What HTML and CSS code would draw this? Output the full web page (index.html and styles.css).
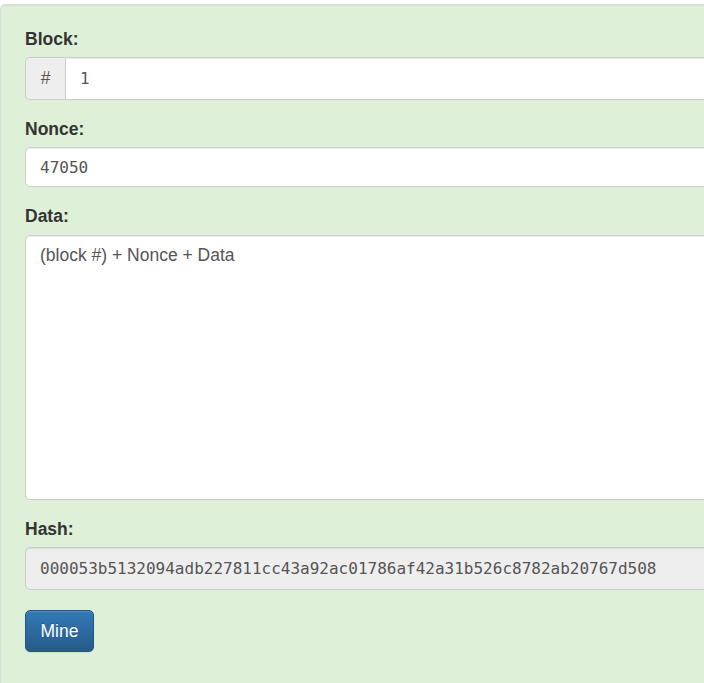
FILE: index.html
```html
<!DOCTYPE html>
<html>
<head>
<meta charset="utf-8">
<link rel="stylesheet" href="styles.css">
</head>
<body>
<div class="well">
  <form class="block-form">
    <div class="form-group">
      <label class="form-label">Block:</label>
      <div class="input-group">
        <span class="input-addon">#</span>
        <input class="form-control mono addon-input" type="text" value="1">
      </div>
    </div>
    <div class="form-group">
      <label class="form-label">Nonce:</label>
      <input class="form-control mono nonce" type="text" value="47050">
    </div>
    <div class="form-group">
      <label class="form-label">Data:</label>
      <textarea class="form-control data" rows="10">(block #) + Nonce + Data</textarea>
    </div>
    <div class="form-group hash-group">
      <label class="form-label">Hash:</label>
      <input class="form-control mono readonly" type="text" readonly value="000053b5132094adb227811cc43a92ac01786af42a31b526c8782ab20767d508">
    </div>
    <button class="btn-primary" type="button">Mine</button>
  </form>
</div>
</body>
</html>
```

FILE: styles.css
```css
html, body {
  margin: 0;
  padding: 0;
  background: #fff;
  overflow: hidden;
}

body {
  font-family: "Liberation Sans", Arial, sans-serif;
  font-size: 17.5px;
  line-height: 25px;
  color: #333;
}

.well {
  margin-top: 4px;
  width: 960px;
  min-height: 760px;
  box-sizing: border-box;
  background: #dff0d8;
  border: 1px solid #dcdcdc;
  border-radius: 5px;
  box-shadow: inset 0 1px 1px rgba(0, 0, 0, 0.05);
  padding: 21.5px 24px 24px 24px;
}

.block-form {
  display: flex;
  flex-direction: column;
}

.form-group {
  margin-bottom: 17px;
  display: flex;
  flex-direction: column;
}

.hash-group {
  margin-bottom: 20.5px;
}

.form-label {
  display: block;
  font-weight: bold;
  line-height: 25px;
  margin-bottom: 5.5px;
  color: #333;
}

.form-control {
  display: block;
  box-sizing: border-box;
  width: 100%;
  height: 42.5px;
  margin: 0;
  padding: 7.5px 14px;
  font-family: "Liberation Sans", Arial, sans-serif;
  font-size: 17.5px;
  line-height: 25px;
  color: #555;
  background: #fff;
  border: 1px solid #ccc;
  border-radius: 5px;
  box-shadow: inset 0 1px 1px rgba(0, 0, 0, 0.075);
  outline: none;
}

.mono {
  font-family: "DejaVu Sans Mono", "Liberation Mono", monospace;
  font-size: 16px;
}

.nonce {
  height: 40px;
}

.data {
  height: 265px;
  resize: none;
  overflow: hidden;
}

.readonly {
  background: #eee;
}

.input-group {
  display: flex;
}

.input-addon {
  box-sizing: border-box;
  width: 40px;
  height: 42.5px;
  padding: 7.5px 0;
  text-align: center;
  font-size: 17.5px;
  line-height: 25px;
  color: #555;
  background: #eee;
  border: 1px solid #ccc;
  border-right: 0;
  border-radius: 5px 0 0 5px;
}

.addon-input {
  flex: 1;
  border-radius: 0 5px 5px 0;
}

.btn-primary {
  align-self: flex-start;
  box-sizing: border-box;
  height: 42px;
  padding: 7.5px 14.5px;
  font-family: "Liberation Sans", Arial, sans-serif;
  font-size: 17.5px;
  line-height: 25px;
  color: #fff;
  text-shadow: 0 -1px 0 rgba(0, 0, 0, 0.2);
  background: linear-gradient(to bottom, #337ab7 0%, #265a88 100%);
  border: 1px solid #245580;
  border-radius: 5px;
  box-shadow: inset 0 1px 0 rgba(255, 255, 255, 0.15), 0 1px 1px rgba(0, 0, 0, 0.075);
  cursor: pointer;
}
```
